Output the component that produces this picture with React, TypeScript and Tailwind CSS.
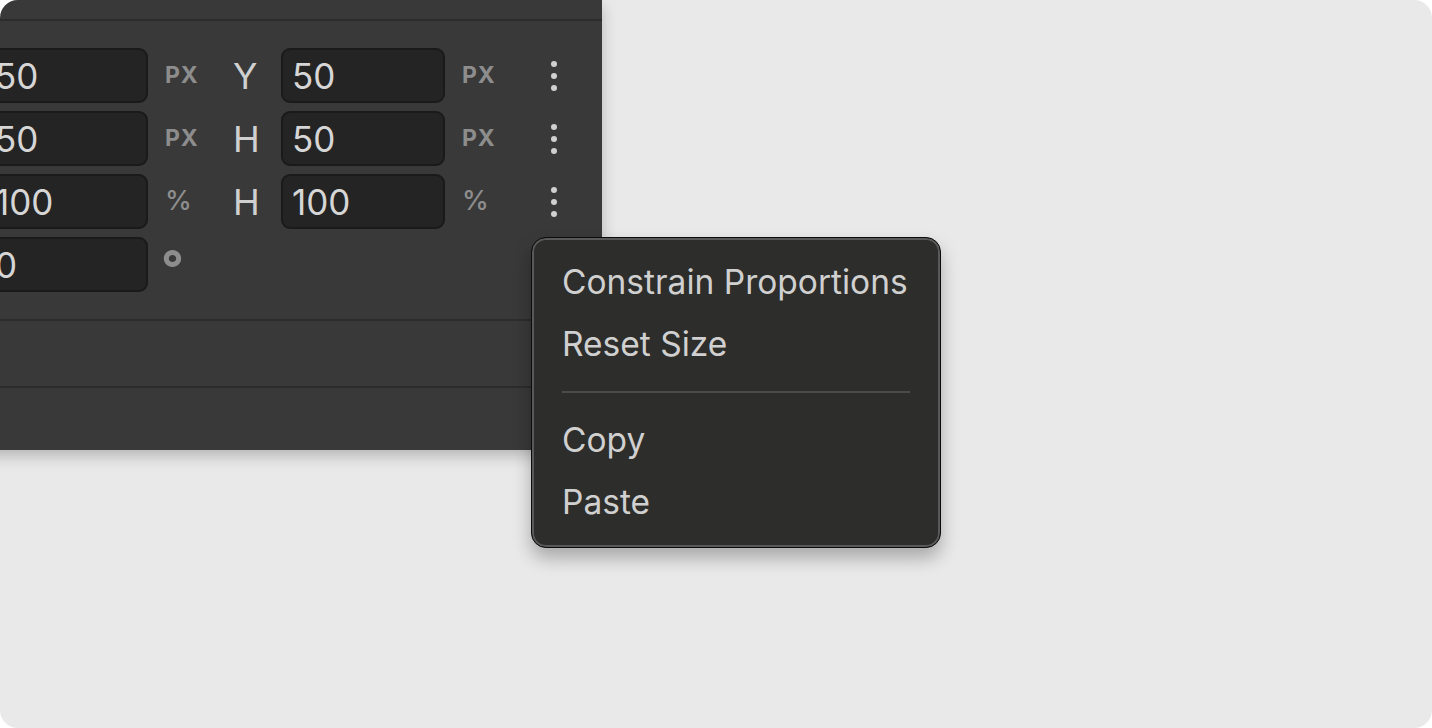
import React from "react";

type Row = {
  a: string;
  unitA: string;
  label?: string;
  b?: string;
  unitB?: string;
  unitBold?: boolean;
};

const rows: Row[] = [
  { a: "50", unitA: "PX", label: "Y", b: "50", unitB: "PX", unitBold: true },
  { a: "50", unitA: "PX", label: "H", b: "50", unitB: "PX", unitBold: true },
  { a: "100", unitA: "%", label: "H", b: "100", unitB: "%" },
  { a: "0", unitA: "°" },
];

const font = { fontFamily: "Inter, 'Noto Sans', sans-serif" };

function Field({ value }: { value: string }) {
  return (
    <div className="w-[164px] h-[55px] shrink-0 flex items-center rounded-[9px] border-2 border-[#1a1a1a] bg-[#242424] pl-[9px] pt-[1px] text-[35px] text-[#d6d6d6]">
      {value}
    </div>
  );
}

function Unit({ text, bold }: { text: string; bold?: boolean }) {
  if (text === "°") {
    return <span className="text-[50px] font-bold leading-none text-[#8d8d8d] mt-[7px] -ml-[4px]">°</span>;
  }
  return (
    <span
      className={
        bold
          ? "text-[23px] font-bold tracking-[0.04em] text-[#8d8d8d]"
          : "text-[27px] font-medium text-[#8d8d8d]"
      }
    >
      {text}
    </span>
  );
}

function Kebab() {
  return (
    <div className="flex flex-col items-center gap-[6px]">
      <div className="w-[6px] h-[6px] rounded-full bg-[#d0d0d0]" />
      <div className="w-[6px] h-[6px] rounded-full bg-[#d0d0d0]" />
      <div className="w-[6px] h-[6px] rounded-full bg-[#d0d0d0]" />
    </div>
  );
}

const menuItems = [["Constrain Proportions", "Reset Size"], ["Copy", "Paste"]];

export default function App() {
  return (
    <div className="w-[1432px] h-[728px] bg-white" style={font}>
      <div className="relative h-full rounded-[18px] bg-[#e9e9e9] overflow-hidden">
        {/* Properties panel, runs off the left edge */}
        <div className="w-[640px] -ml-[38px] bg-[#393939] shadow-[0_6px_14px_rgba(0,0,0,0.22)]">
          <div className="h-[21px] border-b-2 border-[#2c2c2c]" />
          <div className="pt-[27px] pb-[27px] pl-[22px] flex flex-col gap-[8px] border-b-2 border-[#2c2c2c]">
            {rows.map((r, i) => (
              <div key={i} className="flex items-center h-[55px]">
                <Field value={r.a} />
                <div className="w-[85px] shrink-0 pl-[17px] flex items-center">
                  <Unit text={r.unitA} bold={r.unitBold} />
                </div>
                {r.label && (
                  <>
                    <div className="w-[48px] shrink-0 text-[36px] text-[#d0d0d0] leading-none">{r.label}</div>
                    <Field value={r.b!} />
                    <div className="w-[106px] shrink-0 pl-[17px] flex items-center">
                      <Unit text={r.unitB!} bold={r.unitBold} />
                    </div>
                    <Kebab />
                  </>
                )}
              </div>
            ))}
          </div>
          <div className="h-[67px] border-b-2 border-[#2c2c2c]" />
          <div className="h-[62px]" />
        </div>

        {/* Context menu */}
        <div className="absolute left-[531px] top-[237px] w-[410px] rounded-[15px] border-[1.5px] border-[#0c0c0c] bg-[#2d2d2b] shadow-[inset_0_0_0_2px_#595959,0_10px_18px_rgba(0,0,0,0.28)] pt-[13px] pb-[14px] px-[30px] text-[33.5px] text-[#d0d0d0]">
          {menuItems.map((group, gi) => (
            <div key={gi}>
              {gi > 0 && <div className="h-[2px] bg-[#4a4a4a] my-[16px]" />}
              {group.map((item) => (
                <div key={item} className="h-[62px] flex items-center">
                  {item}
                </div>
              ))}
            </div>
          ))}
        </div>
      </div>
    </div>
  );
}
